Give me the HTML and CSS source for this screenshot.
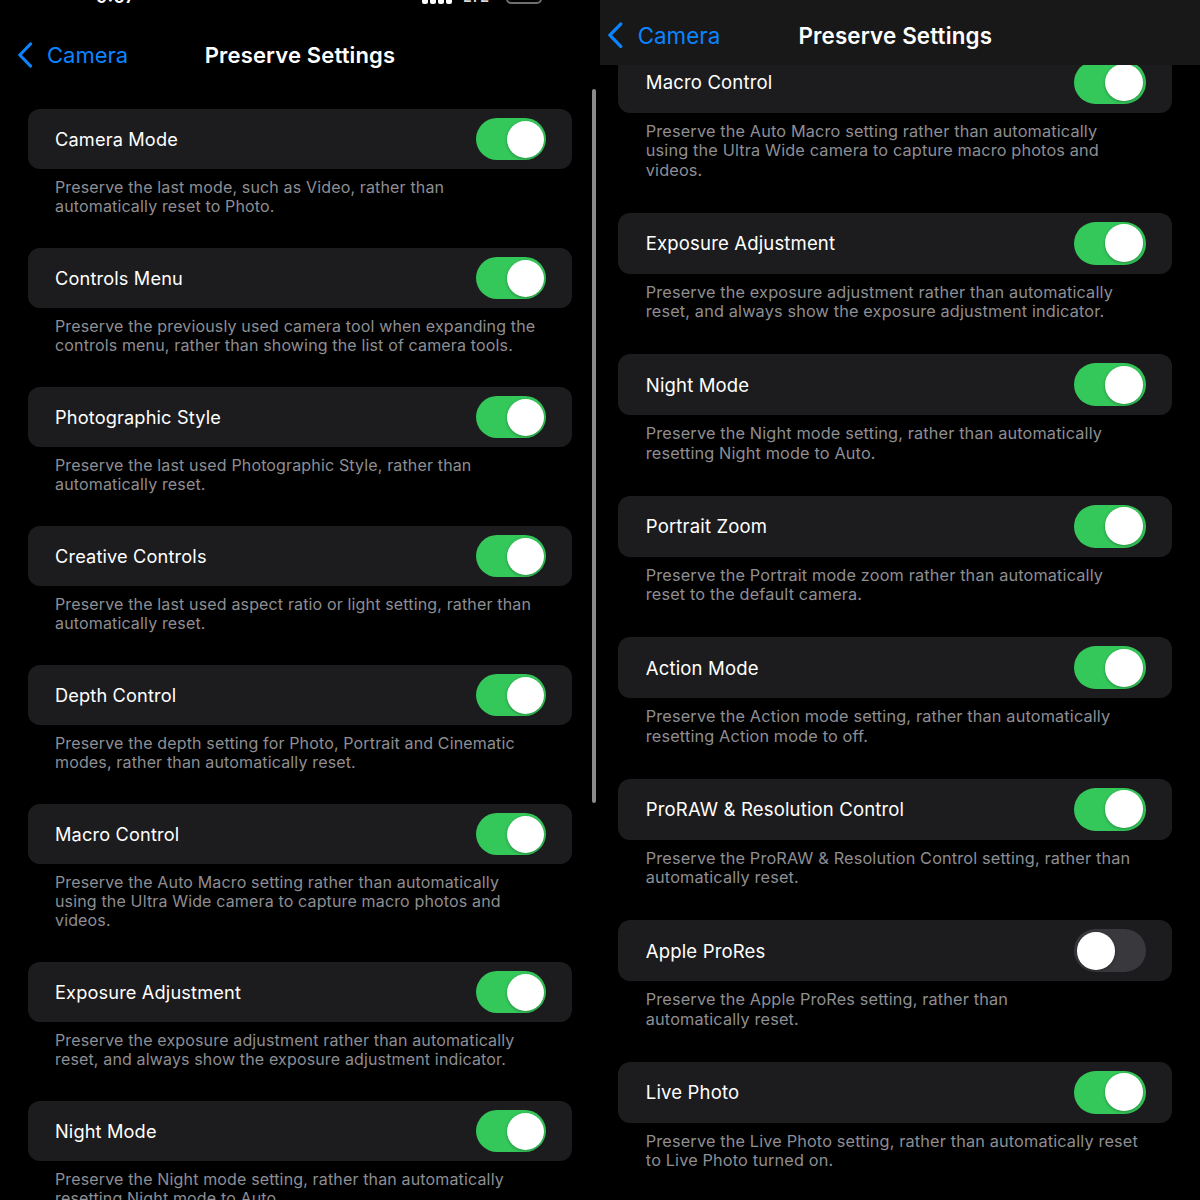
FILE: index.html
```html
<!DOCTYPE html>
<html lang="en">
<head>
<meta charset="utf-8">
<title>Preserve Settings</title>
<link rel="stylesheet" href="styles.css">
</head>
<body>
<div class="screen">
  <div class="status">
    <span class="time">9:07</span>
    <span class="status-right">
      <span class="signal"><i></i><i></i><i></i><i></i></span>
      <span class="net">LTE</span>
      <span class="battery"></span>
    </span>
  </div>
  <header class="nav">
    <span class="back">
      <svg viewBox="0 0 16 26" aria-hidden="true"><path d="M13.5 2 L2.8 13 L13.5 24" fill="none" stroke="currentColor" stroke-width="3.2" stroke-linecap="round" stroke-linejoin="round"/></svg>
      <span>Camera</span>
    </span>
    <span class="title">Preserve Settings</span>
    <span></span>
  </header>
  <div class="list">
    <div class="item">
      <div class="card"><span class="label">Camera Mode</span><span class="toggle"><span class="knob"></span></span></div>
      <p class="desc">Preserve the last mode, such as Video, rather than<br>automatically reset to Photo.</p>
    </div>
    <div class="item">
      <div class="card"><span class="label">Controls Menu</span><span class="toggle"><span class="knob"></span></span></div>
      <p class="desc">Preserve the previously used camera tool when expanding the<br>controls menu, rather than showing the list of camera tools.</p>
    </div>
    <div class="item">
      <div class="card"><span class="label">Photographic Style</span><span class="toggle"><span class="knob"></span></span></div>
      <p class="desc">Preserve the last used Photographic Style, rather than<br>automatically reset.</p>
    </div>
    <div class="item">
      <div class="card"><span class="label">Creative Controls</span><span class="toggle"><span class="knob"></span></span></div>
      <p class="desc">Preserve the last used aspect ratio or light setting, rather than<br>automatically reset.</p>
    </div>
    <div class="item">
      <div class="card"><span class="label">Depth Control</span><span class="toggle"><span class="knob"></span></span></div>
      <p class="desc">Preserve the depth setting for Photo, Portrait and Cinematic<br>modes, rather than automatically reset.</p>
    </div>
    <div class="item">
      <div class="card"><span class="label">Macro Control</span><span class="toggle"><span class="knob"></span></span></div>
      <p class="desc">Preserve the Auto Macro setting rather than automatically<br>using the Ultra Wide camera to capture macro photos and<br>videos.</p>
    </div>
    <div class="item">
      <div class="card"><span class="label">Exposure Adjustment</span><span class="toggle"><span class="knob"></span></span></div>
      <p class="desc">Preserve the exposure adjustment rather than automatically<br>reset, and always show the exposure adjustment indicator.</p>
    </div>
    <div class="item">
      <div class="card"><span class="label">Night Mode</span><span class="toggle"><span class="knob"></span></span></div>
      <p class="desc">Preserve the Night mode setting, rather than automatically<br>resetting Night mode to Auto.</p>
    </div>
  </div>
  <div class="scrollbar"></div>
</div>

<div class="screen">
  <div class="frame">
    <header class="nav nav-overlay">
      <span class="back">
        <svg viewBox="0 0 16 26" aria-hidden="true"><path d="M13.5 2 L2.8 13 L13.5 24" fill="none" stroke="currentColor" stroke-width="3.2" stroke-linecap="round" stroke-linejoin="round"/></svg>
        <span>Camera</span>
      </span>
      <span class="title">Preserve Settings</span>
      <span></span>
    </header>
    <div class="list list-scrolled">
      <div class="item">
        <div class="card"><span class="label">Macro Control</span><span class="toggle"><span class="knob"></span></span></div>
        <p class="desc">Preserve the Auto Macro setting rather than automatically<br>using the Ultra Wide camera to capture macro photos and<br>videos.</p>
      </div>
      <div class="item">
        <div class="card"><span class="label">Exposure Adjustment</span><span class="toggle"><span class="knob"></span></span></div>
        <p class="desc">Preserve the exposure adjustment rather than automatically<br>reset, and always show the exposure adjustment indicator.</p>
      </div>
      <div class="item">
        <div class="card"><span class="label">Night Mode</span><span class="toggle"><span class="knob"></span></span></div>
        <p class="desc">Preserve the Night mode setting, rather than automatically<br>resetting Night mode to Auto.</p>
      </div>
      <div class="item">
        <div class="card"><span class="label">Portrait Zoom</span><span class="toggle"><span class="knob"></span></span></div>
        <p class="desc">Preserve the Portrait mode zoom rather than automatically<br>reset to the default camera.</p>
      </div>
      <div class="item">
        <div class="card"><span class="label">Action Mode</span><span class="toggle"><span class="knob"></span></span></div>
        <p class="desc">Preserve the Action mode setting, rather than automatically<br>resetting Action mode to off.</p>
      </div>
      <div class="item">
        <div class="card"><span class="label">ProRAW &amp; Resolution Control</span><span class="toggle"><span class="knob"></span></span></div>
        <p class="desc">Preserve the ProRAW &amp; Resolution Control setting, rather than<br>automatically reset.</p>
      </div>
      <div class="item">
        <div class="card"><span class="label">Apple ProRes</span><span class="toggle off"><span class="knob"></span></span></div>
        <p class="desc">Preserve the Apple ProRes setting, rather than<br>automatically reset.</p>
      </div>
      <div class="item">
        <div class="card"><span class="label">Live Photo</span><span class="toggle"><span class="knob"></span></span></div>
        <p class="desc">Preserve the Live Photo setting, rather than automatically reset<br>to Live Photo turned on.</p>
      </div>
    </div>
  </div>
</div>
</body>
</html>
```

FILE: styles.css
```css
* { box-sizing: border-box; }

html, body {
  margin: 0;
  padding: 0;
}

body {
  width: 1200px;
  height: 1200px;
  overflow: hidden;
  display: flex;
  background: #000;
  color: #fff;
  font-family: Inter, "Noto Sans", "Liberation Sans", sans-serif;
}

.screen {
  position: relative;
  flex: none;
  width: 600px;
  height: 1200px;
  overflow: hidden;
  background: #000;
}

.frame {
  position: relative;
  width: 600px;
  margin-left: -10px;
  zoom: 1.018;
}

/* status bar (cropped at top) */
.status {
  height: 20px;
  display: flex;
  align-items: flex-start;
  padding: 0 58px 0 96px;
  overflow: hidden;
}

.time {
  font-size: 18px;
  font-weight: 600;
  line-height: 18px;
  margin-top: -12px;
}

.status-right {
  margin-left: auto;
  display: flex;
  align-items: flex-start;
  gap: 11px;
}

.signal {
  display: flex;
  gap: 2px;
}

.signal i {
  display: block;
  width: 6px;
  height: 4px;
  background: #fff;
  border-radius: 0 0 2px 2px;
}

.net {
  width: 32px;
  font-size: 15px;
  font-weight: 600;
  line-height: 15px;
  margin-top: -11px;
  color: #d8d8d8;
}

.battery {
  width: 36px;
  height: 16px;
  margin-top: -12px;
  border: 2px solid #6e6e6e;
  border-radius: 5px;
}

/* navigation bar */
.nav {
  height: 64px;
  padding-top: 6px;
  display: grid;
  grid-template-columns: 1fr auto 1fr;
  align-items: center;
}

.nav-overlay {
  position: absolute;
  top: 0;
  left: 0;
  right: 0;
  z-index: 2;
  background: #181818;
}

.back {
  display: flex;
  align-items: center;
  gap: 14px;
  padding-left: 17px;
  color: #0a84ff;
  font-size: 22px;
}

.back svg {
  width: 16px;
  height: 26px;
  flex: none;
}

.title {
  font-size: 22px;
  font-weight: 600;
  letter-spacing: 0.15px;
}

/* list */
.list {
  padding: 25px 28px 0;
}

.list-scrolled {
  padding-top: 51px;
}

.item {
  margin-bottom: 32px;
}

.card {
  height: 60px;
  display: flex;
  align-items: center;
  justify-content: space-between;
  padding: 0 26px 0 27px;
  background: #1c1c1e;
  border-radius: 12px;
}

.label {
  font-size: 18.2px;
  letter-spacing: 0.15px;
}

.desc {
  margin: 9px 27px 0;
  font-size: 16px;
  line-height: 19px;
  color: #8e8e93;
  letter-spacing: 0.15px;
}

/* switch */
.toggle {
  width: 70px;
  height: 42px;
  flex: none;
  display: flex;
  justify-content: flex-end;
  padding: 2.5px;
  border-radius: 21px;
  background: #34c759;
}

.toggle.off {
  justify-content: flex-start;
  background: #39393d;
}

.knob {
  width: 37px;
  height: 37px;
  border-radius: 50%;
  background: #fff;
  box-shadow: 0 1px 3px rgba(0, 0, 0, 0.3);
}

.scrollbar {
  position: absolute;
  left: 592px;
  top: 89px;
  width: 4px;
  height: 714px;
  border-radius: 2px;
  background: #8a8a8a;
}
```
